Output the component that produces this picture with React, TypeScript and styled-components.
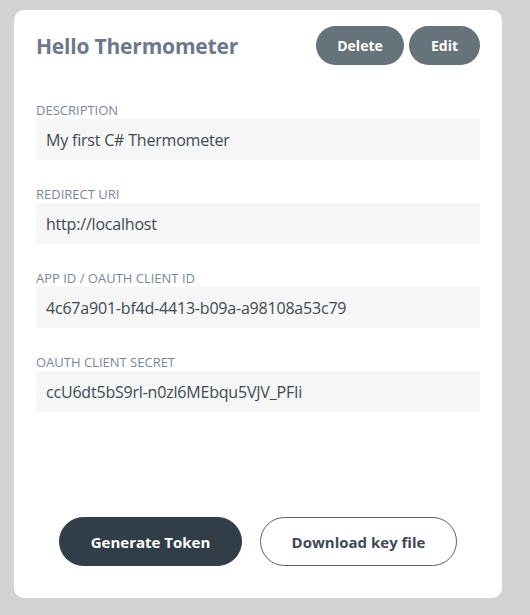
import React from 'react'
import styled, { createGlobalStyle } from 'styled-components'

const GlobalStyle = createGlobalStyle`
  html, body {
    margin: 0;
    padding: 0;
    background: #d3d3d3;
    font-family: 'Open Sans', 'Liberation Sans', sans-serif;
  }
`

const Page = styled.div`
  padding: 10px 28px 17px 14px;
`

const Card = styled.div`
  display: flex;
  flex-direction: column;
  height: 588px;
  box-sizing: border-box;
  padding: 16px 22px 32px;
  background: #fff;
  border-radius: 10px;
`

const Header = styled.div`
  display: flex;
  align-items: center;
  justify-content: space-between;
  height: 39px;
  margin-bottom: 37px;
`

const Title = styled.h1`
  margin: 0;
  font-size: 21px;
  font-weight: 700;
  color: #6c798b;
  letter-spacing: -0.2px;
`

const Actions = styled.div`
  display: flex;
  gap: 5px;
`

const PillButton = styled.button<{ $width: number }>`
  width: ${(p) => p.$width}px;
  height: 39px;
  border: none;
  border-radius: 20px;
  background: #66737a;
  color: #fff;
  font-family: inherit;
  font-size: 14px;
  font-weight: 700;
  cursor: pointer;
`

const Field = styled.div`
  display: flex;
  flex-direction: column;
  & + & {
    margin-top: 26px;
  }
`

const Label = styled.span`
  font-size: 13px;
  line-height: 17px;
  color: #7a879b;
  text-transform: uppercase;
`

const Value = styled.div`
  display: flex;
  align-items: center;
  height: 41px;
  padding: 0 10px;
  background: #f6f6f6;
  font-size: 16px;
  letter-spacing: -0.2px;
  color: #3d4a52;
`

const Footer = styled.div`
  display: flex;
  justify-content: center;
  align-items: center;
  gap: 18px;
  margin-top: auto;
`

const BigButton = styled.button<{ $outline?: boolean; $width: number }>`
  width: ${(p) => p.$width}px;
  height: 49px;
  box-sizing: border-box;
  border-radius: 25px;
  border: 1px solid ${(p) => (p.$outline ? '#55616a' : '#323e47')};
  background: ${(p) => (p.$outline ? '#fff' : '#323e47')};
  color: ${(p) => (p.$outline ? '#3d4a55' : '#fff')};
  font-family: inherit;
  font-size: 15px;
  font-weight: 700;
  cursor: pointer;
`

const fields = [
  { label: 'Description', value: 'My first C# Thermometer' },
  { label: 'Redirect URI', value: 'http://localhost' },
  { label: 'App ID / OAuth Client ID', value: '4c67a901-bf4d-4413-b09a-a98108a53c79' },
  { label: 'OAuth Client Secret', value: 'ccU6dt5bS9rl-n0zl6MEbqu5VJV_PFIi' },
]

const App: React.FC = () => (
  <>
    <GlobalStyle />
    <Page>
      <Card>
        <Header>
          <Title>Hello Thermometer</Title>
          <Actions>
            <PillButton $width={88}>Delete</PillButton>
            <PillButton $width={71}>Edit</PillButton>
          </Actions>
        </Header>
        {fields.map((f) => (
          <Field key={f.label}>
            <Label>{f.label}</Label>
            <Value>{f.value}</Value>
          </Field>
        ))}
        <Footer>
          <BigButton $width={183}>Generate Token</BigButton>
          <BigButton $outline $width={197}>
            Download key file
          </BigButton>
        </Footer>
      </Card>
    </Page>
  </>
)

export default App
